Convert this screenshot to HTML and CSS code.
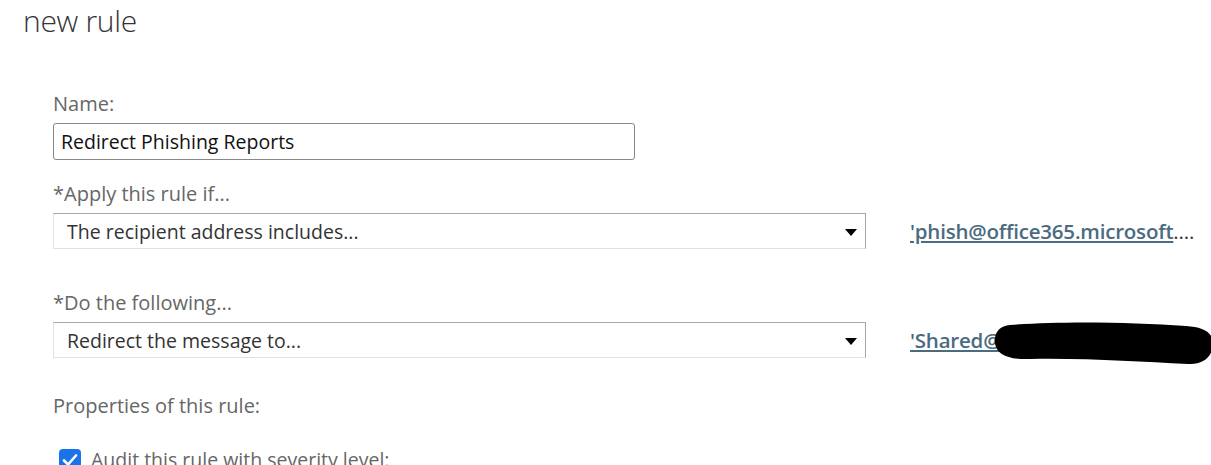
FILE: index.html
```html
<!DOCTYPE html>
<html lang="en">
<head>
<meta charset="utf-8">
<title>new rule</title>
<link rel="stylesheet" href="styles.css">
</head>
<body>
<div class="page">
  <h1 class="title">new rule</h1>
  <div class="form">
    <div class="field name-field">
      <div class="label">Name:</div>
      <div class="textbox">Redirect Phishing Reports</div>
    </div>
    <div class="field apply-field">
      <div class="label">*Apply this rule if...</div>
      <div class="rule-row">
        <div class="select">
          <span>The recipient address includes...</span>
          <svg class="caret" width="12" height="7" viewBox="0 0 12 7"><path d="M0 0H12L6 7Z" fill="#000"/></svg>
        </div>
        <a class="value-link" href="#">'phish@office365.microsoft<span class="ell">....</span></a>
      </div>
    </div>
    <div class="field do-field">
      <div class="label">*Do the following...</div>
      <div class="rule-row">
        <div class="select">
          <span>Redirect the message to...</span>
          <svg class="caret" width="12" height="7" viewBox="0 0 12 7"><path d="M0 0H12L6 7Z" fill="#000"/></svg>
        </div>
        <div class="link-wrap">
          <a class="value-link" href="#">'Shared@</a>
          <svg class="redact" width="232" height="46" viewBox="0 0 232 46"><path d="M20 4 C70 0 140 1 196 5 C214 6 224 12 223 24 C222 37 212 44 198 43 C150 41 100 37 40 38 C20 39 6 34 5 22 C4 11 10 5 20 4 Z" fill="#000"/></svg>
        </div>
      </div>
    </div>
    <div class="field props">
      <div class="label">Properties of this rule:</div>
      <label class="check">
        <span class="box"><svg width="16" height="14" viewBox="0 0 16 14"><path d="M2 7.5L6 11.5L14 2.5" fill="none" stroke="#fff" stroke-width="2.6" stroke-linecap="round" stroke-linejoin="round"/></svg></span>
        <span class="check-text">Audit this rule with severity level:</span>
      </label>
    </div>
  </div>
</div>
</body>
</html>
```

FILE: styles.css
```css
html, body {
  margin: 0;
  padding: 0;
  background: #fff;
  overflow: hidden;
}
body {
  font-family: "Open Sans", "Noto Sans", sans-serif;
  color: #333;
}
.page {
  width: 1211px;
  height: 465px;
  overflow: hidden;
}
.title {
  margin: 0;
  padding: 0 0 0 23px;
  font-size: 30px;
  font-weight: 300;
  line-height: 42px;
  color: #333;
  letter-spacing: -0.3px;
}
.form {
  padding-left: 53px;
  padding-top: 49px;
}
.field {
  display: flex;
  flex-direction: column;
}
.label {
  font-size: 20px;
  line-height: 26px;
  color: #666;
  margin-bottom: 6px;
}
.textbox {
  height: 35px;
  border: 1px solid #8a8886;
  border-radius: 3px;
  box-sizing: content-box;
  font-size: 19.5px;
  line-height: 35px;
  padding-left: 7px;
  width: 573px;
  color: #111;
  margin-bottom: 21px;
}
.rule-row {
  display: flex;
  align-items: center;
  gap: 44px;
}
.apply-field .rule-row {
  margin-bottom: 41px;
}
.do-field .rule-row {
  margin-bottom: 35px;
}
.select {
  width: 813px;
  height: 36px;
  flex: none;
  box-sizing: border-box;
  border-top: 1px solid #a6a6a6;
  border-right: 1px solid #a6a6a6;
  border-left: 1px solid #e1e1e1;
  border-bottom: 1px solid #e1e1e1;
  display: flex;
  align-items: center;
  justify-content: space-between;
  padding: 0 8px 0 13px;
  font-size: 19.5px;
  color: #333;
}
.caret {
  display: block;
  margin-top: 2px;
}
.value-link {
  font-size: 20.5px;
  font-weight: 600;
  color: #4a6b80;
  text-decoration: underline;
  text-underline-offset: 2px;
  white-space: nowrap;
  letter-spacing: -0.2px;
}
.ell {
  text-decoration: none;
  display: inline-block;
  color: #333;
  font-weight: 400;
}
.link-wrap {
  position: relative;
  height: 36px;
  display: flex;
  align-items: center;
}
.redact {
  position: absolute;
  left: 80px;
  top: -1px;
}
.props .label {
  margin-bottom: 27px;
}
.check {
  display: flex;
  align-items: center;
  gap: 10px;
  padding-left: 6px;
}
.box {
  width: 22px;
  height: 22px;
  border-radius: 4px;
  background: #1a73e8;
  display: flex;
  align-items: center;
  justify-content: center;
  flex: none;
}
.check-text {
  font-size: 19.5px;
  color: #666;
}
```
